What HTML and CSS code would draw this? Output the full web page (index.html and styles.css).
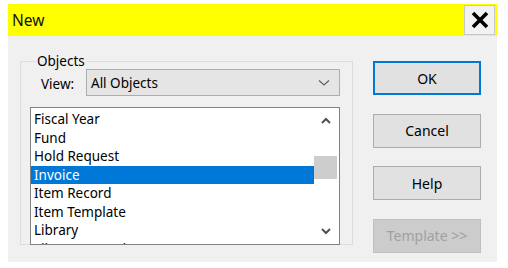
FILE: index.html
```html
<!DOCTYPE html>
<html>
<head>
    <title>New</title>
    <meta charset="UTF-8">
    <link rel="stylesheet" href="styles.css">
</head>
<body>
    <div class="dialog">
        <div class="titlebar">
            <span class="title">New</span>
            <div class="close-btn">
                <svg width="20" height="18" viewBox="0 0 20 18"><path d="M3 2 L17 16 M17 2 L3 16" stroke="#000" stroke-width="3.6" fill="none"/></svg>
            </div>
        </div>
        <div class="content">
            <fieldset class="group">
                <legend>Objects</legend>
                <div class="view-row">
                    <span class="view-label">View:</span>
                    <div class="combo">
                        <span>All Objects</span>
                        <svg width="12" height="8" viewBox="0 0 12 8"><path d="M1 1.5 L6 6 L11 1.5" stroke="#606060" stroke-width="1.2" fill="none"/></svg>
                    </div>
                </div>
                <div class="listbox">
                    <div class="items">
                        <div class="item">Fiscal Year</div>
                        <div class="item">Fund</div>
                        <div class="item">Hold Request</div>
                        <div class="item selected">Invoice</div>
                        <div class="item">Item Record</div>
                        <div class="item">Item Template</div>
                        <div class="item">Library</div>
                        <div class="item">Library Record</div>
                    </div>
                    <div class="scrollbar">
                        <svg class="arrow" width="12" height="10" viewBox="0 0 12 10"><path d="M2 7 L6 3 L10 7" stroke="#505050" stroke-width="2" fill="none"/></svg>
                        <div class="track"><div class="thumb"></div></div>
                        <svg class="arrow" width="12" height="10" viewBox="0 0 12 10"><path d="M2 3 L6 7 L10 3" stroke="#505050" stroke-width="2" fill="none"/></svg>
                    </div>
                </div>
            </fieldset>
            <div class="buttons">
                <div class="btn default">OK</div>
                <div class="btn">Cancel</div>
                <div class="btn">Help</div>
                <div class="btn disabled">Template &gt;&gt;</div>
            </div>
        </div>
    </div>
</body>
</html>
```

FILE: styles.css
```css
body{
    margin: 0;
    background-color: #ffffff;
    font-family: "Noto Sans", "Open Sans", sans-serif;
    font-size: 13.5px;
    color: #000000;
}
.dialog{
    margin: 4px 0 0 8px;
    width: 489px;
    height: 258px;
    background-color: #f0f0f0;
    display: flex;
    flex-direction: column;
}
.titlebar{
    height: 32px;
    background-color: #ffff00;
    display: flex;
    align-items: center;
    justify-content: space-between;
    padding: 0 2px 0 4px;
}
.title{
    font-size: 15.5px;
    color: #111111;
}
.close-btn{
    width: 29px;
    height: 28px;
    background-color: #f2f2f2;
    border: 1px solid #c8c8c8;
    display: flex;
    align-items: center;
    justify-content: center;
}
.content{
    display: flex;
    padding: 16px 0 0 12px;
}
.group{
    margin: 0;
    width: 333px;
    height: 193px;
    box-sizing: border-box;
    border: 1px solid #dcdcdc;
    padding: 0 12px 0 9px;
}
.group legend{
    padding: 0 1px;
    margin-left: 6px;
    font-size: 13.5px;
}
.view-row{
    display: flex;
    align-items: center;
    margin-top: -1px;
}
.view-label{
    margin-left: 11px;
    width: 45px;
    padding-top: 3px;
}
.combo{
    width: 254px;
    height: 27px;
    box-sizing: border-box;
    background-color: #e5e5e5;
    border: 1px solid #adadad;
    display: flex;
    align-items: center;
    justify-content: space-between;
    padding: 0 9px 0 4px;
}
.listbox{
    margin-top: 11px;
    width: 310px;
    height: 138px;
    box-sizing: border-box;
    border: 1px solid #828282;
    background-color: #ffffff;
    display: flex;
    overflow: hidden;
}
.items{
    flex: 1;
    padding-top: 2px;
}
.item{
    height: 18.5px;
    line-height: 18.5px;
    padding-left: 3px;
    white-space: nowrap;
}
.item.selected{
    background-color: #0078d7;
    color: #ffffff;
}
.scrollbar{
    width: 23px;
    display: flex;
    flex-direction: column;
    align-items: center;
    padding: 8px 0 8px;
    margin-right: 2px;
}
.track{
    flex: 1;
    width: 100%;
    padding-top: 30px;
}
.thumb{
    height: 23px;
    background-color: #cdcdcd;
}
.buttons{
    margin-left: 20px;
    margin-top: 9px;
    display: flex;
    flex-direction: column;
    gap: 18.67px;
}
.btn{
    width: 108px;
    height: 34px;
    box-sizing: border-box;
    background-color: #e1e1e1;
    border: 1px solid #adadad;
    display: flex;
    align-items: center;
    justify-content: center;
    font-size: 14px;
}
.btn.default{
    border: 2px solid #0078d7;
}
.btn.disabled{
    background-color: #cccccc;
    border-color: #bfbfbf;
    color: #a0a0a0;
}
```
